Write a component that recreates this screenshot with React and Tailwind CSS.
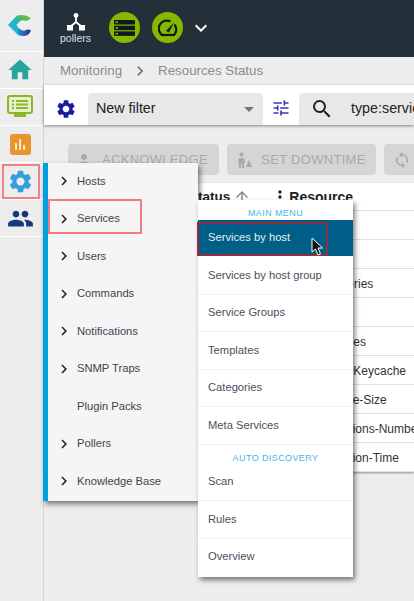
import { MdHome, MdSettings, MdPeople, MdTune, MdSearch, MdPerson, MdSync, MdArrowUpward, MdMoreVert, MdArrowDropDown, MdKeyboardArrowDown, MdChevronRight } from "react-icons/md";

const firstMenu = ["Hosts", "Services", "Users", "Commands", "Notifications", "SNMP Traps", "Plugin Packs", "Pollers", "Knowledge Base"];
const mainMenu = ["Service Groups", "Templates", "Categories", "Meta Services"];
const rows = ["", "", "Slowqueries", "", "Table-Files", "Myisam-Keycache", "Database-Size", "Connections-Number", "Connection-Time"];

function Logo() {
  return (
    <svg width="26" height="26" viewBox="8 14 26 26">
      <defs>
        <linearGradient id="logoTop" x1="0" y1="1" x2="1" y2="0">
          <stop offset="0" stopColor="#1fb08a" />
          <stop offset="1" stopColor="#86c51f" />
        </linearGradient>
        <linearGradient id="logoBottom" x1="0" y1="0" x2="1" y2="0">
          <stop offset="0" stopColor="#1f9fe0" />
          <stop offset="1" stopColor="#33248f" />
        </linearGradient>
      </defs>
      <path d="M9 26 L18 16.500 L21 22 L17.500 26 L21 31 L22 37 L18 35 Z" fill="#23b4c8" />
      <path d="M18 16.500 Q26 14.500 32 19 Q29 22.500 26 21.500 Q22 20.500 19.500 23 Z" fill="url(#logoTop)" />
      <path d="M19.500 29 Q24 33 27 31 Q29.500 30 32 31.500 Q30 36.500 25 37 Q21 37.500 18 35 Z" fill="url(#logoBottom)" />
    </svg>
  );
}

function SideItem({ children }) {
  return <div className="flex h-[37px] items-center justify-center border-b border-white pr-[3px]">{children}</div>;
}

export default function App() {
  return (
    <div className="relative flex h-[601px] w-[414px] overflow-hidden bg-[#ededed] font-['Liberation_Sans',sans-serif]">
      <aside className="flex w-[44px] shrink-0 flex-col border-r border-[#d4d4d4] bg-[#ededed]">
        <div className="flex h-[52px] items-center justify-center border-b border-white pr-[3px]">
          <Logo />
        </div>
        <SideItem>
          <MdHome className="text-[#26a69a]" size={28} />
        </SideItem>
        <SideItem>
          <svg width="26" height="24" viewBox="0 0 26 24">
            <rect x="1" y="1" width="24" height="17" rx="2" fill="#e6efcf" stroke="#8ab82a" strokeWidth="2" />
            <rect x="7" y="18" width="12" height="4" fill="#8ab82a" />
            <path d="M5 6h2M9 6h12M5 9.500h2M9 9.500h12M5 13h2M9 13h12" stroke="#8ab82a" strokeWidth="2" />
          </svg>
        </SideItem>
        <SideItem>
          <div className="flex h-[21px] w-[21px] items-end justify-center gap-[2px] rounded-[3px] bg-[#e8952f] pb-[5px]">
            <span className="h-[7px] w-[2px] bg-[#fbe5c8]" />
            <span className="h-[11px] w-[2px] bg-[#fbe5c8]" />
            <span className="h-[5px] w-[2px] bg-[#fbe5c8]" />
          </div>
        </SideItem>
        <SideItem>
          <MdSettings className="text-[#359fdc]" size={27} />
        </SideItem>
        <SideItem>
          <MdPeople className="text-[#17387f]" size={27} />
        </SideItem>
      </aside>

      <main className="flex min-w-0 flex-1 flex-col">
        <header className="flex h-[57px] shrink-0 items-center bg-[#232f39] pb-[2px] pl-[15px]">
          <div className="flex w-[33px] flex-col items-center">
            <svg width="20" height="20" viewBox="0 0 20 20">
              <circle cx="10" cy="3.500" r="2.400" fill="#fff" />
              <rect x="1" y="13" width="6" height="5.500" fill="#fff" />
              <rect x="13" y="13" width="6" height="5.500" fill="#fff" />
              <path d="M10 5v5L4 15M10 10l6 5" stroke="#fff" strokeWidth="1.800" fill="none" />
            </svg>
            <span className="text-[10.500px] leading-[12px] text-[#cfe3f2]">pollers</span>
          </div>
          <div className="ml-[17px] flex h-[31px] w-[31px] items-center justify-center rounded-full bg-[#84b900]">
            <svg width="21" height="16" viewBox="0 0 21 16">
              <rect width="21" height="4.500" fill="#14181a" />
              <rect y="5.700" width="21" height="4.500" fill="#14181a" />
              <rect y="11.400" width="21" height="4.500" fill="#14181a" />
              <rect x="1.500" y="1.500" width="2.500" height="1.500" fill="#84b900" />
              <rect x="1.500" y="7.200" width="2.500" height="1.500" fill="#84b900" />
              <rect x="1.500" y="12.900" width="2.500" height="1.500" fill="#84b900" />
            </svg>
          </div>
          <div className="ml-[12px] flex h-[31px] w-[31px] items-center justify-center rounded-full bg-[#84b900]">
            <svg width="20" height="18" viewBox="0 0 20 18" fill="none">
              <path d="M4 16 A8 8 0 0 1 12.500 2.500 M16.500 5.500 A8 8 0 0 1 16 16" stroke="#14181a" strokeWidth="2.200" />
              <path d="M3 16 H17" stroke="#14181a" strokeWidth="2.200" />
              <path d="M8 12 L16 3.500 L11 13.500 Z" fill="#14181a" />
            </svg>
          </div>
          <MdKeyboardArrowDown className="ml-[6px] text-white" size={24} />
        </header>

        <div className="flex h-[28px] shrink-0 items-center pl-[16px] text-[13.300px] text-[#8b8b8b]">
          <span>Monitoring</span>
          <MdChevronRight className="ml-[8px] mr-[8px] text-[#777]" size={20} />
          <span>Resources Status</span>
        </div>

        <div className="flex h-[40px] shrink-0 items-end bg-white shadow-[0_1px_3px_rgba(0,0,0,0.45)]">
          <MdSettings className="mb-[5px] ml-[11px] shrink-0 text-[#1a1a9c]" size={22} />
          <div className="ml-[11px] flex h-[32px] w-[175px] shrink-0 items-center justify-between rounded-t-[4px] bg-[#e8e8e8] pl-[8px] pr-[2px] text-[14.300px] text-[#222]">
            New filter
            <MdArrowDropDown className="text-[#757575]" size={24} />
          </div>
          <MdTune className="mb-[7px] ml-[8px] shrink-0 text-[#3c35b5]" size={20} />
          <div className="ml-[8px] flex h-[32px] flex-1 items-center overflow-hidden whitespace-nowrap rounded-tl-[4px] bg-[#e8e8e8] pl-[11px] text-[14.300px] text-[#222]">
            <MdSearch className="shrink-0" size={24} />
            <span className="ml-[17px]">type:service</span>
          </div>
        </div>

        <div className="flex h-[58px] shrink-0 items-start gap-[8px] pl-[24px] pt-[19px] text-[13px] tracking-[0.3px] whitespace-nowrap text-[#a9a9a9]">
          <div className="flex h-[31px] w-[151px] shrink-0 items-center gap-[9px] rounded-[4px] bg-[#d5d5d5] pl-[7px]">
            <MdPerson size={18} />
            ACKNOWLEDGE
          </div>
          <div className="flex h-[31px] w-[149px] shrink-0 items-center justify-center gap-[8px] rounded-[4px] bg-[#d5d5d5]">
            <svg width="16" height="16" viewBox="0 0 16 16" fill="#a9a9a9">
              <circle cx="4.500" cy="2.500" r="2" />
              <path d="M2 6h5l1 5H7v5H5v-4H4v4H2V11L1 10z" />
              <path d="M9 15l3-7 3 7z" />
            </svg>
            SET DOWNTIME
          </div>
          <div className="flex h-[31px] w-[40px] shrink-0 items-center justify-center rounded-l-[4px] bg-[#d5d5d5] pr-[5px]">
            <MdSync size={18} />
          </div>
        </div>

        <div className="w-full overflow-hidden bg-white text-[12px] text-[#333] shadow-[0_1px_2px_rgba(0,0,0,0.4)]">
          <div className="flex h-[28px] items-center border-b border-[#e0e0e0] pl-[145px] pt-[1px] text-[13.500px] font-bold text-[#222]">
            <span>Status</span>
            <MdArrowUpward className="ml-[3px] text-[#888]" size={18} />
            <MdMoreVert className="ml-[19px] text-[#222]" size={20} />
            <span className="-ml-[1px] text-[14px]">Resource</span>
          </div>
          {rows.map((name, i) => (
            <div key={i} className="flex h-[29px] items-center whitespace-nowrap border-b border-[#e0e0e0] pl-[264px] pt-[1px]">
              {name}
            </div>
          ))}
        </div>
      </main>

      <nav className="absolute left-[43px] top-[163px] h-[338px] w-[155px] border-l-[5px] border-[#00a0df] bg-[#f5f5f5] text-[11.200px] text-[#3f4450] shadow-[2px_3px_5px_rgba(0,0,0,0.5)]">
        {firstMenu.map((item) => (
          <div key={item} className="flex h-[37.500px] items-center pb-[1px]">
            <span className="flex w-[29px] justify-center pl-[3px] text-[#222]">
              {item !== "Plugin Packs" && <MdChevronRight size={18} />}
            </span>
            {item}
          </div>
        ))}
      </nav>
      <div className="absolute left-[48px] top-[199px] h-[35px] w-[94px] rounded-[1px] border-2 border-[#f27a82]" />

      <nav className="absolute left-[198px] top-[200px] w-[155px] bg-white text-[11.200px] text-[#4a4f5a] shadow-[2px_3px_5px_rgba(0,0,0,0.5)]">
        <div className="flex h-[20px] items-end justify-center text-[9px] tracking-[0.4px] text-[#3fb5e8]">MAIN MENU</div>
        <div className="flex h-[36px] items-center bg-[#005f88] pb-[1px] pl-[10px] text-[#e4eef3]">Services by host</div>
        <div className="flex h-[38.500px] items-center border-b border-[#f2f2f2] pl-[10px] pt-[1px]">Services by host group</div>
        {mainMenu.map((item) => (
          <div key={item} className="flex h-[37.500px] items-center border-b border-[#f2f2f2] pl-[10px]">
            {item}
          </div>
        ))}
        <div className="flex h-[19px] items-center justify-center pt-[9px] text-[9px] tracking-[0.4px] text-[#3fb5e8]">AUTO DISCOVERY</div>
        <div className="flex h-[37px] items-center border-b border-[#f2f2f2] pl-[10px]">Scan</div>
        <div className="flex h-[38px] items-center border-b border-[#f2f2f2] pl-[10px]">Rules</div>
        <div className="flex h-[38px] items-center pb-[3px] pl-[10px]">Overview</div>
      </nav>
      <div className="absolute left-[197px] top-[222px] h-[34px] w-[131px] border-2 border-[#8e2f3f]" />

      <svg className="absolute left-[311px] top-[237px]" width="13" height="19" viewBox="0 0 13 19">
        <path d="M1 1v14l3.500-3 2.500 6 2.500-1-2.500-6h4.500z" fill="#111" stroke="#fff" strokeWidth="1" />
      </svg>

      <div className="absolute left-[2px] top-[164px] h-[35px] w-[38px] border-2 border-[#f0808a]" />
    </div>
  );
}
